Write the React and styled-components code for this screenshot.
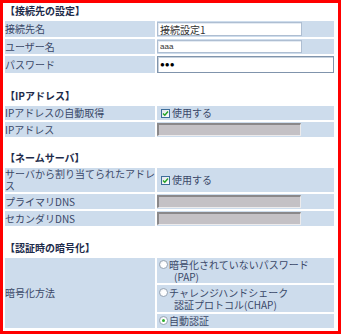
import React from 'react'
import styled, { createGlobalStyle } from 'styled-components'

const Global = createGlobalStyle`
    html, body {
        margin: 0;
        padding: 0;
        background: #fff;
    }
    body {
        font-family: "Noto Sans CJK JP", "DejaVu Sans", sans-serif;
    }
`

const Frame = styled.div`
    width: 341px;
    height: 334px;
    box-sizing: border-box;
    border: 3px solid #ff0000;
    padding: 0 4px 0 2px;
    background: #fff;
`

const Section = styled.section`
    margin-top: ${p => p.$gap || 0}px;
`

const Heading = styled.div`
    height: 16px;
    margin-bottom: 2px;
    font-size: 10px;
    line-height: 16px;
    font-weight: bold;
    color: #1d2b4a;
    white-space: nowrap;
`

const Grid = styled.div`
    display: grid;
    grid-template-columns: 150px 177px;
    grid-template-rows: ${p => p.$rows};
    gap: 2px;
`

const Cell = styled.div`
    background: #cddcec;
    display: flex;
    align-items: center;
    font-size: 10px;
    line-height: 12px;
    color: #3a4868;
    min-width: 0;
`

const Label = styled(Cell)`
    grid-row: span ${p => p.$span || 1};
    padding-left: 0;
`

const Value = styled(Cell)`
    padding-left: 0;
`

const TextBox = styled.input`
    box-sizing: border-box;
    width: ${p => p.$w}px;
    height: ${p => p.$h}px;
    margin: 0;
    padding: 0 2px;
    border: 1px solid #aebed2;
    box-shadow: inset 1px 1px 0 #e4ebf3;
    background: #fff;
    font-family: inherit;
    font-size: 10px;
    color: #333;
    outline: none;
`

const SmallBox = styled(TextBox)`
    font-family: "Liberation Sans", sans-serif;
    font-size: 8px;
`

const PassBox = styled(TextBox)`
    border: 1px solid #8094ac;
    box-shadow: inset 1px 1px 0 #c5d0dc;
    font-family: "Liberation Sans", sans-serif;
    font-size: 8px;
    color: #000;
`

const DisabledBox = styled.div`
    box-sizing: border-box;
    width: 144px;
    height: 13px;
    background: #c4c1c5;
    border-top: 2px solid #8a888a;
    border-left: 2px solid #8a888a;
    border-right: 1px solid #ecebec;
    border-bottom: 1px solid #ecebec;
`

const Check = styled.span`
    box-sizing: border-box;
    width: 9px;
    height: 9px;
    margin: 0 2px 0 4px;
    border: 1px solid #3d6d9a;
    background: linear-gradient(135deg, #dfe4ea, #fff);
    display: inline-flex;
    align-items: center;
    justify-content: center;
    flex: none;
`

const Radio = styled.span`
    box-sizing: border-box;
    width: 9px;
    height: 9px;
    margin: 0 1px 0 2px;
    border-radius: 50%;
    border: 1px solid #9aa6b4;
    background: radial-gradient(circle at 60% 60%, #fff 40%, #e2e6ea);
    display: inline-flex;
    align-items: center;
    justify-content: center;
    flex: none;
    align-self: flex-start;
    margin-top: 1px;
    &::after {
        content: '';
        display: ${p => (p.$on ? 'block' : 'none')};
        width: 3px;
        height: 3px;
        border-radius: 50%;
        background: #2fb02f;
    }
`

const Option = styled.div`
    display: flex;
    align-items: flex-start;
`

const OptionText = styled.div`
    display: flex;
    flex-direction: column;
    white-space: nowrap;
`

const SubLine = styled.span`
    padding-left: 5px;
`

function CheckMark() {
    return (
        <svg width="7" height="7" viewBox="0 0 7 7">
            <path d="M1 3.5 L2.8 5.3 L6 1.5" fill="none" stroke="#22a322" strokeWidth="1.4" />
        </svg>
    )
}

function UseBox() {
    return (
        <Value>
            <Check>
                <CheckMark />
            </Check>
            使用する
        </Value>
    )
}

export default function App() {
    return (
        <Frame>
            <Global />
            <Section>
                <Heading>【接続先の設定】</Heading>
                <Grid $rows="16px 15px 17px">
                    <Label>接続先名</Label>
                    <Value>
                        <TextBox $w={145} $h={14} defaultValue="接続設定1" />
                    </Value>
                    <Label>ユーザー名</Label>
                    <Value>
                        <SmallBox $w={145} $h={13} defaultValue="aaa" />
                    </Value>
                    <Label>パスワード</Label>
                    <Value>
                        <PassBox $w={177} $h={17} readOnly value="●●●" />
                    </Value>
                </Grid>
            </Section>

            <Section $gap={15}>
                <Heading>【IPアドレス】</Heading>
                <Grid $rows="14px 15px">
                    <Label>IPアドレスの自動取得</Label>
                    <UseBox />
                    <Label>IPアドレス</Label>
                    <Value>
                        <DisabledBox />
                    </Value>
                </Grid>
            </Section>

            <Section $gap={13}>
                <Heading>【ネームサーバ】</Heading>
                <Grid $rows="24px 15px 15px">
                    <Label>
                        サーバから割り当てられたアドレ
                        <br />ス
                    </Label>
                    <UseBox />
                    <Label>プライマリDNS</Label>
                    <Value>
                        <DisabledBox />
                    </Value>
                    <Label>セカンダリDNS</Label>
                    <Value>
                        <DisabledBox />
                    </Value>
                </Grid>
            </Section>

            <Section $gap={14}>
                <Heading>【認証時の暗号化】</Heading>
                <Grid $rows="25px 27px 14px">
                    <Label $span={3}>暗号化方法</Label>
                    <Value>
                        <Option>
                            <Radio />
                            <OptionText>
                                <span>暗号化されていないパスワード</span>
                                <SubLine>(PAP)</SubLine>
                            </OptionText>
                        </Option>
                    </Value>
                    <Value>
                        <Option>
                            <Radio />
                            <OptionText>
                                <span>チャレンジハンドシェーク</span>
                                <SubLine>認証プロトコル(CHAP)</SubLine>
                            </OptionText>
                        </Option>
                    </Value>
                    <Value>
                        <Option>
                            <Radio $on />
                            <OptionText>
                                <span>自動認証</span>
                            </OptionText>
                        </Option>
                    </Value>
                </Grid>
            </Section>
        </Frame>
    )
}
